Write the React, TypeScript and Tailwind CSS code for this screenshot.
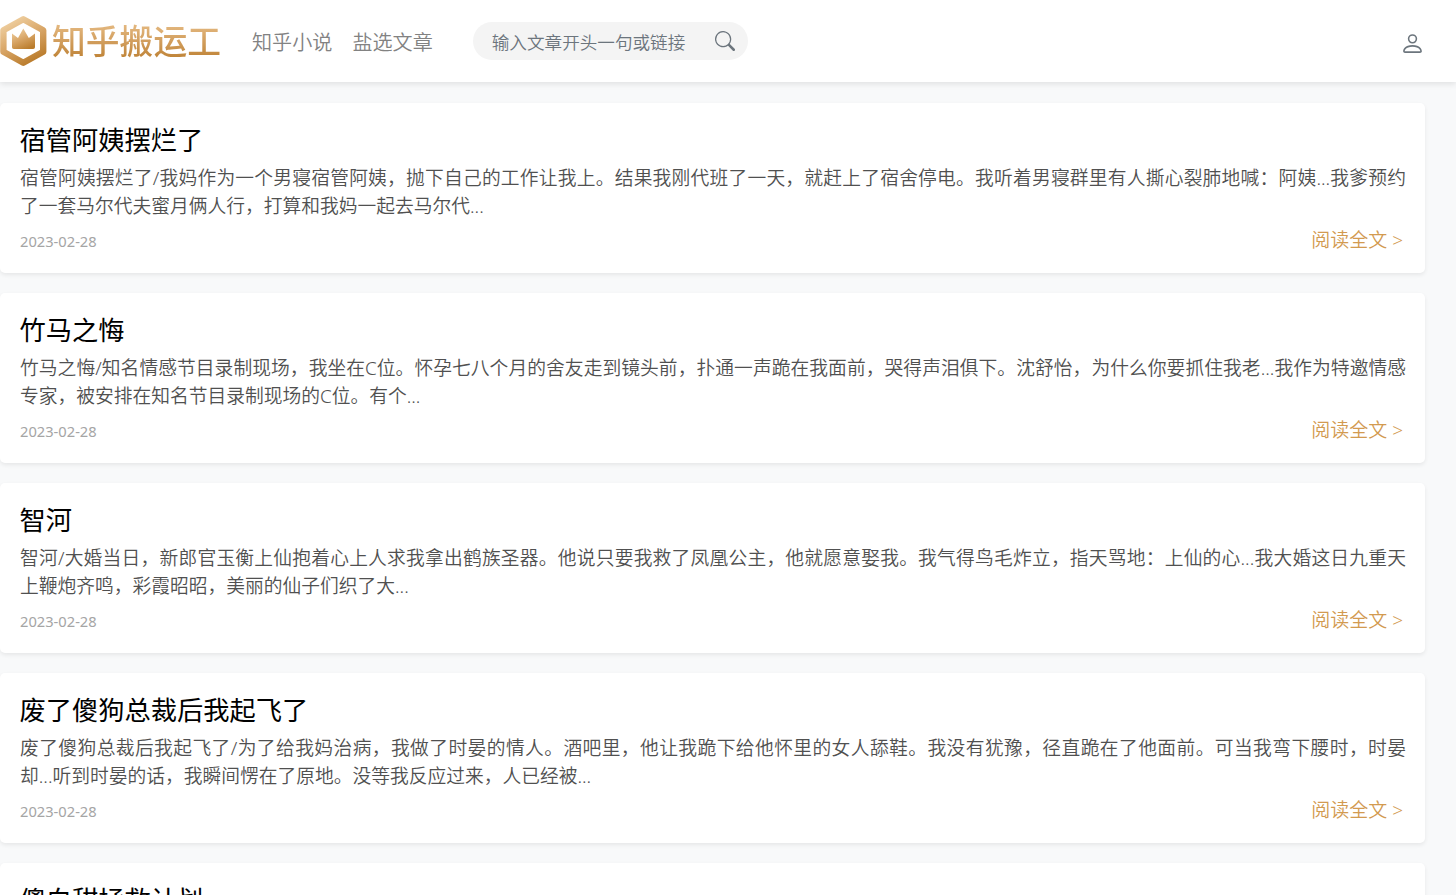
import { BsPerson, BsSearch } from "react-icons/bs";

const articles = [
  {
    title: "宿管阿姨摆烂了",
    lines: [
      "宿管阿姨摆烂了/我妈作为一个男寝宿管阿姨，抛下自己的工作让我上。结果我刚代班了一天，就赶上了宿舍停电。我听着男寝群里有人撕心裂肺地喊：阿姨...我爹预约",
      "了一套马尔代夫蜜月俩人行，打算和我妈一起去马尔代...",
    ],
    date: "2023-02-28",
  },
  {
    title: "竹马之悔",
    lines: [
      "竹马之悔/知名情感节目录制现场，我坐在C位。怀孕七八个月的舍友走到镜头前，扑通一声跪在我面前，哭得声泪俱下。沈舒怡，为什么你要抓住我老...我作为特邀情感",
      "专家，被安排在知名节目录制现场的C位。有个...",
    ],
    date: "2023-02-28",
  },
  {
    title: "智河",
    lines: [
      "智河/大婚当日，新郎官玉衡上仙抱着心上人求我拿出鹤族圣器。他说只要我救了凤凰公主，他就愿意娶我。我气得鸟毛炸立，指天骂地：上仙的心...我大婚这日九重天",
      "上鞭炮齐鸣，彩霞昭昭，美丽的仙子们织了大...",
    ],
    date: "2023-02-28",
  },
  {
    title: "废了傻狗总裁后我起飞了",
    lines: [
      "废了傻狗总裁后我起飞了/为了给我妈治病，我做了时晏的情人。酒吧里，他让我跪下给他怀里的女人舔鞋。我没有犹豫，径直跪在了他面前。可当我弯下腰时，时晏",
      "却...听到时晏的话，我瞬间愣在了原地。没等我反应过来，人已经被...",
    ],
    date: "2023-02-28",
  },
  {
    title: "傻白甜拯救计划",
  },
];

function Logo() {
  return (
    <a className="flex items-center h-[52px] w-[220px]">
      <svg className="w-[47px] h-[52px] shrink-0" viewBox="0 0 47 52">
        <defs>
          <linearGradient id="gold" x1="0.2" y1="0" x2="0.7" y2="1">
            <stop offset="0" stopColor="#efcfa0" />
            <stop offset="0.5" stopColor="#d8a566" />
            <stop offset="1" stopColor="#ba7c2c" />
          </linearGradient>
        </defs>
        <path
          d="M23.3 4.3 43.2 15.2V36.8L23.3 47.7 3.4 36.8V15.2Z"
          fill="none"
          stroke="url(#gold)"
          strokeWidth="6.4"
          strokeLinejoin="round"
        />
        <path
          d="M12 18.5 18 23 23.3 13.5 28.8 23 35 18.5V32.2Q35 34 33.2 34H13.8Q12 34 12 32.2Z"
          fill="url(#gold)"
        />
      </svg>
      <span className="ml-[5px] text-[33.8px] font-medium leading-[52px] whitespace-nowrap bg-linear-to-b from-[#e3b77e] from-20% to-[#be8233] to-85% bg-clip-text text-transparent">
        知乎搬运工
      </span>
    </a>
  );
}

export default function App() {
  return (
    <div className="h-[895px] overflow-hidden bg-[#f8f9fa] font-['Noto_Sans','Noto_Sans_CJK_SC',sans-serif]">
      <header className="relative h-[82px] bg-white flex items-center shadow-[0_2px_6px_rgba(0,0,0,0.1)]">
        <Logo />
        <nav className="flex ml-8 mt-1 gap-5 text-[20.1px] font-[350] text-[#828282]">
          <a>知乎小说</a>
          <a>盐选文章</a>
        </nav>
        <div className="flex items-center justify-between ml-10 w-[275px] h-[38px] pl-[19px] pr-[13px] rounded-full bg-[#f4f4f4] text-[#6c757d]">
          <span className="text-[17.6px] mt-0.5 font-[350]">输入文章开头一句或链接</span>
          <BsSearch className="w-5 h-5" />
        </div>
        <BsPerson className="ml-auto mr-[31px] mt-1 w-[25px] h-[25px] text-[#6c757d]" />
      </header>

      <main className="pt-[21px] w-[1425px] flex flex-col gap-5">
        {articles.map((a) => (
          <article
            key={a.title}
            className="h-[170px] shrink-0 px-5 pt-5 rounded-[5px] bg-white shadow-[0_2px_4px_rgba(0,0,0,0.075)]"
          >
            <h2 className="-ml-[0.5px] text-[26.25px] leading-[34px] text-black">{a.title}</h2>
            {a.lines && (
              <>
                <div className="mt-[7px] w-[1386px] text-[18.75px] leading-7 font-[350] text-[#505050] whitespace-nowrap">
                  <p className="h-7 [text-align-last:justify] whitespace-normal">{a.lines[0]}</p>
                  <p className="h-7">{a.lines[1]}</p>
                </div>
                <div className="flex items-center justify-between mt-1 h-8">
                  <span className="text-[14.7px] mt-[3px] text-[#a5a5a5]">{a.date}</span>
                  <a className="mr-0.5 text-[19px] font-[350] text-[#d29a50]">阅读全文 &gt;</a>
                </div>
              </>
            )}
          </article>
        ))}
      </main>
    </div>
  );
}
